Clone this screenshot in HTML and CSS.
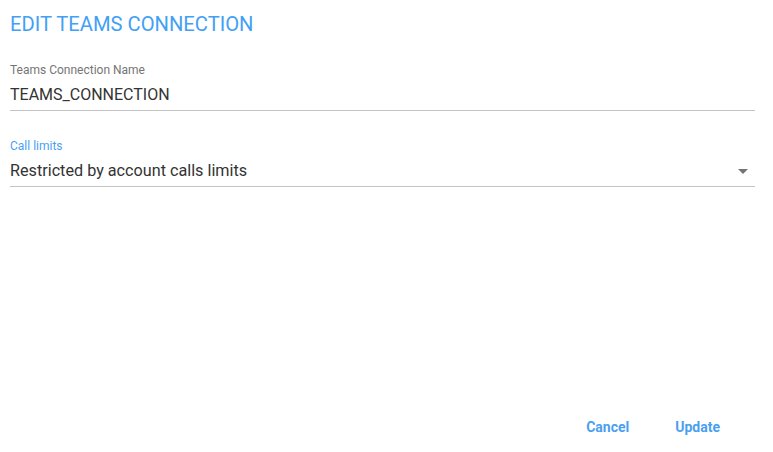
FILE: index.html
```html
<!DOCTYPE html>
<html>
<head>
<meta charset="utf-8">
<link rel="stylesheet" href="styles.css">
</head>
<body>
<div class="dialog">
  <h1 class="title">EDIT TEAMS CONNECTION</h1>
  <div class="fields">
    <div class="field">
      <label class="label">Teams Connection Name</label>
      <div class="value">TEAMS_CONNECTION</div>
    </div>
    <div class="field select">
      <label class="label active">Call limits</label>
      <div class="value">
        <span>Restricted by account calls limits</span>
        <svg class="arrow" width="10" height="5" viewBox="0 0 10 5"><path d="M0 0 L10 0 L5 5 Z" fill="#757575"/></svg>
      </div>
    </div>
  </div>
  <div class="actions">
    <button class="btn">Cancel</button>
    <button class="btn">Update</button>
  </div>
</div>
</body>
</html>
```
FILE: styles.css
```css
html, body {
  margin: 0;
  padding: 0;
  background: #fff;
}
body {
  font-family: Roboto, "Liberation Sans", sans-serif;
  width: 773px;
  height: 452px;
}
.dialog {
  box-sizing: border-box;
  height: 452px;
  padding: 10px 18px 0 10px;
  display: flex;
  flex-direction: column;
}
.title {
  margin: 0;
  font-size: 20.2px;
  font-weight: 400;
  line-height: 28px;
  color: #42a0f5;
}
.fields {
  margin-top: 25px;
  display: flex;
  flex-direction: column;
  gap: 28px;
}
.field {
  display: flex;
  flex-direction: column;
}
.label {
  font-size: 12px;
  line-height: 14px;
  color: #757575;
}
.label.active {
  color: #4a9ff5;
}
.value {
  margin-top: 8px;
  font-size: 16px;
  line-height: 20px;
  color: #333;
  padding-bottom: 5px;
  border-bottom: 1px solid #c4c4c4;
  display: flex;
  align-items: center;
  justify-content: space-between;
}
.select .value span {
  font-size: 16.2px;
}
.arrow {
  margin-right: 7px;
}
.actions {
  margin-top: auto;
  margin-bottom: 17px;
  margin-right: 12px;
  display: flex;
  justify-content: flex-end;
}
.btn {
  background: none;
  border: none;
  font-family: Roboto, "Liberation Sans", sans-serif;
  font-size: 14px;
  font-weight: 700;
  color: #4aa0f0;
  padding: 0 23px;
  line-height: 16px;
}
```
